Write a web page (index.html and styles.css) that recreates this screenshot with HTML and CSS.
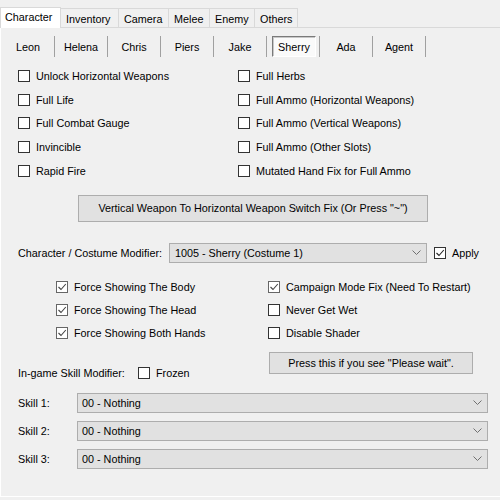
FILE: index.html
```html
<!DOCTYPE html>
<html>
<head>
<meta charset="utf-8">
<link rel="stylesheet" href="styles.css">
</head>
<body>
<div class="window">
  <div class="tabs">
    <div class="tab active">Character</div>
    <div class="tab t-inv">Inventory</div>
    <div class="tab t-cam">Camera</div>
    <div class="tab t-mel">Melee</div>
    <div class="tab t-ene">Enemy</div>
    <div class="tab t-oth">Others</div>
  </div>
  <div class="page">
    <div class="chars">
      <div class="cell">Leon</div>
      <div class="cell">Helena</div>
      <div class="cell">Chris</div>
      <div class="cell">Piers</div>
      <div class="cell">Jake</div>
      <div class="cell"><span class="pressed">Sherry</span></div>
      <div class="cell">Ada</div>
      <div class="cell">Agent</div>
    </div>

    <div class="opts">
      <label class="chk"><span class="box"></span>Unlock Horizontal Weapons</label>
      <label class="chk"><span class="box"></span>Full Herbs</label>
      <label class="chk"><span class="box"></span>Full Life</label>
      <label class="chk"><span class="box"></span>Full Ammo (Horizontal Weapons)</label>
      <label class="chk"><span class="box"></span>Full Combat Gauge</label>
      <label class="chk"><span class="box"></span>Full Ammo (Vertical Weapons)</label>
      <label class="chk"><span class="box"></span>Invincible</label>
      <label class="chk"><span class="box"></span>Full Ammo (Other Slots)</label>
      <label class="chk"><span class="box"></span>Rapid Fire</label>
      <label class="chk"><span class="box"></span>Mutated Hand Fix for Full Ammo</label>
    </div>

    <div class="btn-row">
      <div class="btn wide">Vertical Weapon To Horizontal Weapon Switch Fix (Or Press "~")</div>
    </div>

    <div class="costume-row">
      <span class="lbl">Character / Costume Modifier:</span>
      <div class="combo costume">
        <span>1005 - Sherry (Costume 1)</span>
        <svg class="chev" width="9" height="5" viewBox="0 0 9 5"><path d="M0.5 0.5 L4.5 4.5 L8.5 0.5" fill="none" stroke="#707070" stroke-width="1"/></svg>
      </div>
      <label class="chk apply"><span class="box dark"><svg width="10" height="10" viewBox="0 0 10 10"><path d="M1.5 5 L4 7.5 L8.8 2" fill="none" stroke="#222" stroke-width="1.1"/></svg></span>Apply</label>
    </div>

    <div class="opts2">
      <label class="chk"><span class="box grey"><svg width="10" height="10" viewBox="0 0 10 10"><path d="M1.5 5 L4 7.5 L8.8 2" fill="none" stroke="#444" stroke-width="1.1"/></svg></span>Force Showing The Body</label>
      <label class="chk"><span class="box grey"><svg width="10" height="10" viewBox="0 0 10 10"><path d="M1.5 5 L4 7.5 L8.8 2" fill="none" stroke="#444" stroke-width="1.1"/></svg></span>Campaign Mode Fix (Need To Restart)</label>
      <label class="chk"><span class="box grey"><svg width="10" height="10" viewBox="0 0 10 10"><path d="M1.5 5 L4 7.5 L8.8 2" fill="none" stroke="#444" stroke-width="1.1"/></svg></span>Force Showing The Head</label>
      <label class="chk"><span class="box"></span>Never Get Wet</label>
      <label class="chk"><span class="box grey"><svg width="10" height="10" viewBox="0 0 10 10"><path d="M1.5 5 L4 7.5 L8.8 2" fill="none" stroke="#444" stroke-width="1.1"/></svg></span>Force Showing Both Hands</label>
      <label class="chk"><span class="box"></span>Disable Shader</label>
    </div>

    <div class="skill-head">
      <div class="skill-left">
        <span class="lbl">In-game Skill Modifier:</span>
        <label class="chk"><span class="box"></span>Frozen</label>
      </div>
      <div class="btn wait">Press this if you see "Please wait".</div>
    </div>

    <div class="skills">
      <div class="skill-row">
        <span class="skill-lbl">Skill 1:</span>
        <div class="combo skill"><span>00 - Nothing</span><svg class="chev" width="9" height="5" viewBox="0 0 9 5"><path d="M0.5 0.5 L4.5 4.5 L8.5 0.5" fill="none" stroke="#707070" stroke-width="1"/></svg></div>
      </div>
      <div class="skill-row">
        <span class="skill-lbl">Skill 2:</span>
        <div class="combo skill"><span>00 - Nothing</span><svg class="chev" width="9" height="5" viewBox="0 0 9 5"><path d="M0.5 0.5 L4.5 4.5 L8.5 0.5" fill="none" stroke="#707070" stroke-width="1"/></svg></div>
      </div>
      <div class="skill-row">
        <span class="skill-lbl">Skill 3:</span>
        <div class="combo skill"><span>00 - Nothing</span><svg class="chev" width="9" height="5" viewBox="0 0 9 5"><path d="M0.5 0.5 L4.5 4.5 L8.5 0.5" fill="none" stroke="#707070" stroke-width="1"/></svg></div>
      </div>
    </div>
  </div>
</div>
</body>
</html>
```

FILE: styles.css
```css
* { box-sizing: border-box; }
html, body {
  margin: 0;
  padding: 0;
  width: 500px;
  height: 500px;
  background: #f0f0f0;
  overflow: hidden;
}
body {
  font-family: "Liberation Sans", Arial, sans-serif;
  font-size: 10.8px;
  color: #000;
}
.window {
  width: 500px;
  height: 500px;
  display: flex;
  flex-direction: column;
}
.tabs {
  display: flex;
  align-items: flex-end;
  height: 28px;
  padding-left: 0;
  position: relative;
  z-index: 2;
}
.tab {
  height: 19px;
  margin-bottom: 1px;
  border: 1px solid #d9d9d9;
  border-bottom: none;
  border-left: none;
  background: #f0f0f0;
  padding: 3px 0 0 5px;
  line-height: 14px;
}
.tab.active {
  height: 21px;
  margin-bottom: 0;
  background: #fff;
  border-left: 1px solid #d9d9d9;
  width: 61px;
  padding-left: 4px;
  padding-top: 2px;
}
.t-inv { width: 58px; }
.t-cam { width: 50px; }
.t-mel { width: 41px; }
.t-ene { width: 45px; }
.t-oth { width: 43px; }

.page {
  height: 470px;
  border-top: 1px solid #d9d9d9;
  border-left: 1px solid #fff;
  border-bottom: 1px solid #fff;
  margin-top: -1px;
}
.chars {
  display: flex;
  margin-top: 8px;
  padding-left: 1px;
  height: 21px;
}
.cell {
  width: 53px;
  height: 21px;
  border-right: 1px solid #a0a0a0;
  display: flex;
  align-items: center;
  justify-content: center;
}
.pressed {
  display: flex;
  align-items: center;
  justify-content: center;
  width: 44px;
  height: 21px;
  margin-left: 2px;
  background: #fafafa;
  border: 1px solid;
  border-color: #7a7a7a #fff #fff #7a7a7a;
  box-shadow: inset 1px 1px 0 #c8c8c8;
}

.chk {
  display: flex;
  align-items: center;
  white-space: nowrap;
}
.box {
  width: 12px;
  height: 12px;
  border: 1px solid #333;
  background: #fff;
  margin-right: 6px;
  flex: none;
  display: flex;
  align-items: center;
  justify-content: center;
}
.box.grey { border-color: #666; }
.box.dark { border-color: #333; }
.box svg { display: block; }

.opts {
  display: grid;
  grid-template-columns: 220px 1fr;
  grid-auto-rows: 23.75px;
  padding-left: 17px;
  margin-top: 7px;
}

.btn {
  background: #e1e1e1;
  border: 1px solid #adadad;
  display: flex;
  align-items: center;
  justify-content: center;
}
.btn-row {
  margin-top: 12px;
  padding-left: 77px;
}
.btn.wide {
  width: 350px;
  height: 27px;
}

.costume-row {
  display: flex;
  align-items: center;
  margin-top: 21px;
  height: 20px;
  padding-left: 17px;
}
.costume-row .lbl { width: 151px; }
.combo {
  height: 20px;
  background: #e1e1e1;
  border: 1px solid #adadad;
  display: flex;
  align-items: center;
  justify-content: space-between;
  padding: 0 5px 0 5px;
}
.combo.costume { width: 258px; }
.chev { display: block; }
.apply { margin-left: 7px; }

.opts2 {
  display: grid;
  grid-template-columns: 212px 1fr;
  grid-auto-rows: 23px;
  padding-left: 55px;
  margin-top: 13px;
}

.skill-head {
  display: flex;
  align-items: flex-start;
  margin-top: 7px;
  padding-left: 17px;
  height: 31px;
}
.skill-left {
  width: 251px;
  height: 20px;
  margin-top: 11px;
  display: flex;
  align-items: center;
}
.skill-left .lbl { width: 120px; }
.btn.wait {
  width: 204px;
  height: 22px;
}

.skills {
  margin-top: 10px;
  display: flex;
  flex-direction: column;
  gap: 8px;
}
.skill-row {
  display: flex;
  align-items: center;
  padding-left: 17px;
  height: 20px;
}
.skill-lbl { width: 59px; }
.combo.skill {
  width: 411px;
  padding-left: 4px;
}
```
